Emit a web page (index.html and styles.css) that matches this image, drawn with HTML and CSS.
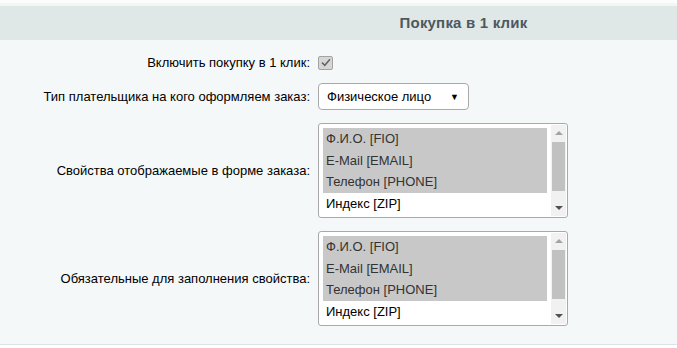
FILE: index.html
```html
<!DOCTYPE html>
<html lang="ru">
<head>
<meta charset="utf-8">
<title>Покупка в 1 клик</title>
<link rel="stylesheet" href="styles.css">
</head>
<body>
<div class="page">
  <div class="heading">Покупка в 1 клик</div>
  <div class="form">
    <div class="label">Включить покупку в 1 клик:</div>
    <div class="field">
      <span class="checkbox">
        <svg width="10" height="9" viewBox="0 0 10 9"><path d="M1 4.6 L3.8 7.3 L9 1.3" fill="none" stroke="#646464" stroke-width="1.5"/></svg>
      </span>
    </div>

    <div class="label">Тип плательщика на кого оформляем заказ:</div>
    <div class="field">
      <div class="select">
        <span>Физическое лицо</span>
        <span class="arrow">&#9660;</span>
      </div>
    </div>

    <div class="label">Свойства отображаемые в форме заказа:</div>
    <div class="field">
      <div class="listbox">
        <div class="options">
          <div class="opt sel">Ф.И.О. [FIO]</div>
          <div class="opt sel">E-Mail [EMAIL]</div>
          <div class="opt sel">Телефон [PHONE]</div>
          <div class="opt">Индекс [ZIP]</div>
        </div>
        <div class="scroll">
          <span class="up"></span>
          <span class="thumb"></span>
          <span class="down"></span>
        </div>
      </div>
    </div>

    <div class="label">Обязательные для заполнения свойства:</div>
    <div class="field">
      <div class="listbox">
        <div class="options">
          <div class="opt sel">Ф.И.О. [FIO]</div>
          <div class="opt sel">E-Mail [EMAIL]</div>
          <div class="opt sel">Телефон [PHONE]</div>
          <div class="opt">Индекс [ZIP]</div>
        </div>
        <div class="scroll">
          <span class="up"></span>
          <span class="thumb"></span>
          <span class="down"></span>
        </div>
      </div>
    </div>
  </div>
</div>
</body>
</html>
```

FILE: styles.css
```css
html, body {
  margin: 0;
  padding: 0;
  background: #ffffff;
}
body {
  font-family: "Liberation Sans", Arial, sans-serif;
  font-size: 13px;
  color: #000;
}
.page {
  height: 345px;
  box-sizing: border-box;
  padding-top: 6px;
  border-bottom: 1px solid #dde2e5;
  background: linear-gradient(#fbfcfc 0, #fbfcfc 3px, #f2f6f6 3px, #f2f6f6 6px, #f5f8f9 6px);
}
.heading {
  height: 34px;
  line-height: 34px;
  background: #e0e7e7;
  color: #4b5a5f;
  font-weight: bold;
  font-size: 15px;
  letter-spacing: 0.2px;
  text-align: center;
  padding-left: 250px;
}
.form {
  display: grid;
  grid-template-columns: 310px 1fr;
  column-gap: 8px;
  row-gap: 13px;
  padding-top: 15px;
  align-items: center;
}
.label {
  text-align: right;
  white-space: nowrap;
}
.field {
  display: flex;
  align-items: center;
}
.checkbox {
  width: 13px;
  height: 12px;
  border: 1px solid #a3a3a3;
  border-radius: 2px;
  background: #d6d6d6;
  display: flex;
  align-items: center;
  justify-content: center;
}
.select {
  width: 151px;
  height: 27px;
  box-sizing: border-box;
  border: 1px solid #a9a9a9;
  border-radius: 4px;
  background: #fff;
  display: flex;
  align-items: center;
  justify-content: space-between;
  padding: 0 9px 0 8px;
}
.arrow {
  font-size: 9px;
  color: #000;
}
.listbox {
  width: 250px;
  height: 95px;
  box-sizing: border-box;
  border: 1px solid #a9a9a9;
  border-radius: 3px;
  background: #fff;
  display: flex;
  overflow: hidden;
}
.options {
  flex: 1;
  padding: 4px 4px 0 4px;
}
.opt {
  height: 21.7px;
  line-height: 22px;
  padding-left: 3px;
  color: #000;
}
.opt.sel {
  background: #c8c8c8;
  color: #333;
}
.scroll {
  width: 15px;
  margin: 1px 1px 1px 0;
  background: #f1f1f1;
  display: flex;
  flex-direction: column;
  align-items: center;
}
.up, .down {
  width: 0;
  height: 0;
  border-left: 4px solid transparent;
  border-right: 4px solid transparent;
}
.up {
  margin-top: 6px;
  border-bottom: 4px solid #a3a3a3;
}
.thumb {
  width: 13px;
  height: 49px;
  margin-top: 7px;
  background: #c1c1c1;
}
.down {
  margin-top: auto;
  margin-bottom: 6px;
  border-top: 4px solid #505050;
}
```
